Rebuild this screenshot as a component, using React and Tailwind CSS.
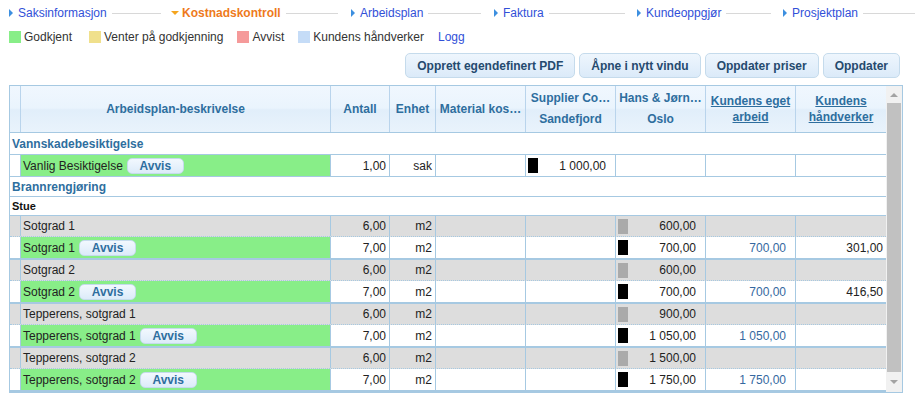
import React from "react";

const LINK = "text-[#3150d8]";

function NavItem({ w, label, active, mr }) {
  return (
    <div className={`flex items-center shrink-0 ${w}`}>
      {active ? (
        <span className="w-0 h-0 border-x-[4px] border-x-transparent border-t-[4px] border-t-[#f5a51e]" />
      ) : (
        <span className="w-0 h-0 border-y-[4px] border-y-transparent border-l-[4px] border-l-[#3d8fe0]" />
      )}
      <span
        className={
          active
            ? "ml-[3px] font-bold text-[#ee7a1c] whitespace-nowrap"
            : `ml-[5px] ${LINK} whitespace-nowrap`
        }
      >
        {label}
      </span>
      <span className={`flex-1 h-px bg-[#d8d8d8] ml-[5px] ${mr}`} />
    </div>
  );
}

function Legend({ color, label }) {
  return (
    <div className="flex items-center">
      <span className={`w-[12px] h-[12px] ${color}`} />
      <span className="ml-[3px] text-[#333]">{label}</span>
    </div>
  );
}

function TopButton({ children }) {
  return (
    <button className="h-[25px] px-[11px] rounded-[5px] border border-[#c5dbec] bg-[linear-gradient(to_bottom,#eef6fd,#dbeaf9)] text-[#254a6e] font-bold text-[12px] whitespace-nowrap">
      {children}
    </button>
  );
}

function Avvis() {
  return (
    <span className="ml-[4px] inline-flex items-center justify-center w-[57px] h-[16px] rounded-[5px] border border-[#c5dbec] bg-[linear-gradient(to_bottom,#f2f8fe,#dcebf9)] text-[#2e6e9e] font-bold">
      Avvis
    </span>
  );
}

const CELL = "shrink-0 h-full border-r border-[#a6c9e2] flex items-center";

function Box({ gray }) {
  return <span className={`w-[10px] h-[15px] ${gray ? "bg-[#aaaaaa]" : "bg-black"}`} />;
}

function BoxCell({ value, gray }) {
  return (
    <div className={`${CELL} w-[90px] justify-between pl-[2px] pr-[9px]`}>
      {value ? (
        <>
          <Box gray={gray} />
          <span>{value}</span>
        </>
      ) : null}
    </div>
  );
}

function DataRow({ kind, desc, avvis, antall, enhet, sup, hans, keget, khand }) {
  const gray = kind === "gray";
  const rowCls =
    kind === "gray"
      ? "flex h-[21px] bg-[#dddddd] border-b border-dotted border-[#a6c9e2]"
      : kind === "green"
      ? "flex h-[23px] bg-white border-b-2 border-[#a6c9e2]"
      : "flex h-[22px] bg-white border-b border-[#a6c9e2]";
  return (
    <div className={rowCls}>
      <div className={`${CELL} w-[11px]`} />
      <div className={`${CELL} w-[310px] pl-[2px] ${gray ? "" : "bg-[#88ee88]"}`}>
        <span className="whitespace-nowrap">{desc}</span>
        {avvis ? <Avvis /> : null}
      </div>
      <div className={`${CELL} w-[59px] justify-end pr-[3px]`}>{antall}</div>
      <div className={`${CELL} w-[46px] justify-end pr-[3px]`}>{enhet}</div>
      <div className={`${CELL} w-[90px]`} />
      <BoxCell value={sup} />
      <BoxCell value={hans} gray={gray} />
      <div className={`${CELL} w-[90px] justify-end pr-[9px] text-[#3568a0]`}>{keget}</div>
      <div className="shrink-0 h-full w-[90px] flex items-center justify-end pr-[3px]">{khand}</div>
    </div>
  );
}

function GroupRow({ label, small, h }) {
  return (
    <div className={`flex items-center ${h} bg-white border-b border-[#a6c9e2] pl-[2px]`}>
      <span
        className={
          small ? "font-bold text-[11px] text-[#111]" : "font-bold text-[#2e6e9e]"
        }
      >
        {label}
      </span>
    </div>
  );
}

const HCELL = "shrink-0 h-full border-r border-[#b9d4ec] flex items-center justify-center";

export default function App() {
  const pairs = [
    ["Sotgrad 1", "600,00", "700,00", "700,00", "301,00"],
    ["Sotgrad 2", "600,00", "700,00", "700,00", "416,50"],
    ["Tepperens, sotgrad 1", "900,00", "1 050,00", "1 050,00", ""],
    ["Tepperens, sotgrad 2", "1 500,00", "1 750,00", "1 750,00", ""],
  ];
  return (
    <div className="w-[918px] h-[396px] overflow-hidden bg-white text-[12px] text-[#222] font-['Liberation_Sans',Arial,sans-serif]">
      {/* top navigation */}
      <div className="flex items-center h-[26px] pl-[9px] pr-[3px]">
        <NavItem w="w-[162px]" label="Saksinformasjon" mr="mr-[10px]" />
        <NavItem w="w-[180px]" label="Kostnadskontroll" active mr="mr-[13px]" />
        <NavItem w="w-[143px]" label="Arbeidsplan" mr="mr-[13px]" />
        <NavItem w="w-[143px]" label="Faktura" mr="mr-[12px]" />
        <NavItem w="w-[146px]" label="Kundeoppgjør" mr="mr-[12px]" />
        <NavItem w="flex-1" label="Prosjektplan" mr="mr-0" />
      </div>

      {/* legend */}
      <div className="flex items-center h-[22px] pl-[9px] gap-[14px]">
        <Legend color="bg-[#88ee88]" label="Godkjent" />
        <div className="ml-[3px]">
          <Legend color="bg-[#f0e08c]" label="Venter på godkjenning" />
        </div>
        <Legend color="bg-[#f59a9a]" label="Avvist" />
        <Legend color="bg-[#c5dcf7]" label="Kundens håndverker" />
        <span className={LINK}>Logg</span>
      </div>

      {/* buttons */}
      <div className="flex justify-end gap-[4px] pr-[18px] mt-[5px]">
        <TopButton>Opprett egendefinert PDF</TopButton>
        <TopButton>Åpne i nytt vindu</TopButton>
        <TopButton>Oppdater priser</TopButton>
        <TopButton>Oppdater</TopButton>
      </div>

      {/* grid */}
      <div className="mt-[7px] ml-[9px] w-[894px] border border-[#a6c9e2] flex">
        <div className="w-[876px] shrink-0 flex flex-col">
          <div className="flex h-[47px] border-b border-[#a6c9e2] bg-[linear-gradient(to_bottom,#f0f7fe_0%,#eaf4fd_48%,#e1eefa_52%,#e9f3fc_100%)] text-[#2e6e9e] font-bold">
            <div className={`${HCELL} w-[11px]`} />
            <div className={`${HCELL} w-[310px]`}>Arbeidsplan-beskrivelse</div>
            <div className={`${HCELL} w-[59px]`}>Antall</div>
            <div className={`${HCELL} w-[46px]`}>Enhet</div>
            <div className={`${HCELL} w-[90px]`}>Material kos…</div>
            <div className={`${HCELL} w-[90px] flex-col`}>
              <span className="leading-[21px] whitespace-nowrap">Supplier Co…</span>
              <span className="leading-[21px]">Sandefjord</span>
            </div>
            <div className={`${HCELL} w-[90px] flex-col`}>
              <span className="leading-[21px] whitespace-nowrap">Hans &amp; Jørn…</span>
              <span className="leading-[21px]">Oslo</span>
            </div>
            <div className={`${HCELL} w-[90px] flex-col underline leading-[16px] text-center`}>
              <span>Kundens eget</span>
              <span>arbeid</span>
            </div>
            <div className="shrink-0 h-full w-[90px] flex flex-col items-center justify-center underline leading-[16px] text-center">
              <span>Kundens</span>
              <span>håndverker</span>
            </div>
          </div>

          <GroupRow label="Vannskadebesiktigelse" h="h-[22px]" />
          <DataRow
            kind="single"
            desc="Vanlig Besiktigelse"
            avvis
            antall="1,00"
            enhet="sak"
            sup="1 000,00"
          />
          <GroupRow label="Brannrengjøring" h="h-[20px]" />
          <GroupRow label="Stue" small h="h-[19px]" />
          {pairs.map(([d, g, h, k, kh]) => (
            <React.Fragment key={d}>
              <DataRow kind="gray" desc={d} antall="6,00" enhet="m2" hans={g} />
              <DataRow
                kind="green"
                desc={d}
                avvis
                antall="7,00"
                enhet="m2"
                hans={h}
                keget={k}
                khand={kh}
              />
            </React.Fragment>
          ))}
        </div>

        {/* scrollbar */}
        <div className="w-[16px] shrink-0 flex flex-col items-center bg-[#f1f1f1]">
          <div className="h-[17px] w-full flex items-center justify-center">
            <span className="w-0 h-0 border-x-[4px] border-x-transparent border-b-[4px] border-b-[#a3a3a3]" />
          </div>
          <div className="h-[269px] w-[14px] bg-[#c1c1c1]" />
          <div className="h-[20px] w-full flex items-center justify-center">
            <span className="w-0 h-0 border-x-[4px] border-x-transparent border-t-[4px] border-t-[#a3a3a3]" />
          </div>
        </div>
      </div>
    </div>
  );
}
